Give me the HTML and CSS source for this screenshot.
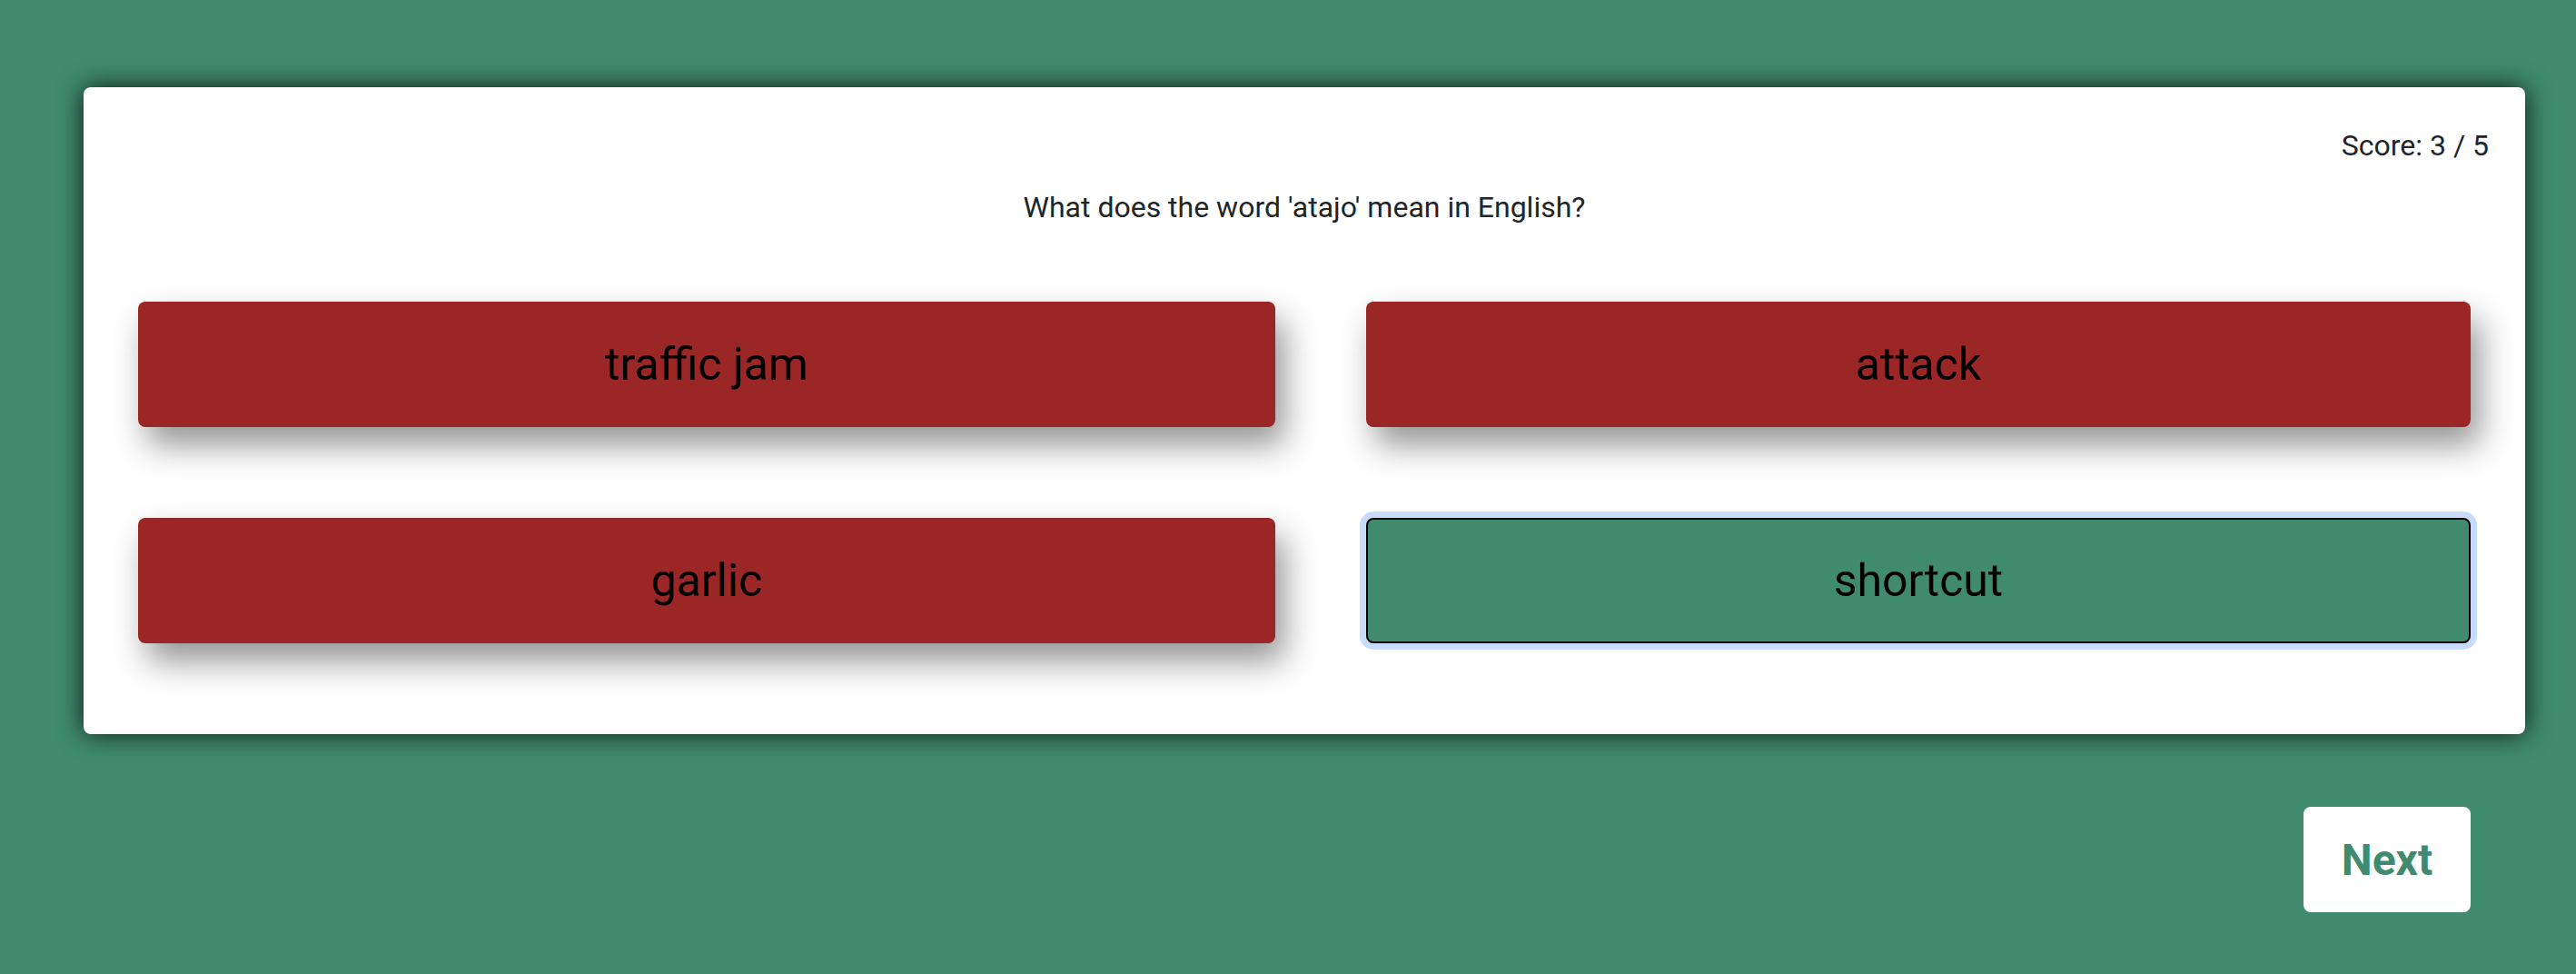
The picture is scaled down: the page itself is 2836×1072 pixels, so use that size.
FILE: index.html
```html
<!DOCTYPE html>
<html lang="en">
<head>
<meta charset="utf-8">
<title>Quiz</title>
<link rel="stylesheet" href="styles.css">
</head>
<body>
<div class="page">
  <div class="card">
    <div class="score">Score: 3 / 5</div>
    <div class="question">What does the word 'atajo' mean in English?</div>
    <div class="options">
      <button class="opt wrong">traffic jam</button>
      <button class="opt wrong">attack</button>
      <button class="opt wrong">garlic</button>
      <button class="opt correct">shortcut</button>
    </div>
  </div>
  <div class="actions">
    <button class="next">Next</button>
  </div>
</div>
</body>
</html>
```
FILE: styles.css
```css
html, body {
  margin: 0;
  padding: 0;
}

body {
  background: #408b6f;
  font-family: Roboto, "Liberation Sans", sans-serif;
  color: #212529;
  height: 1072px;
  overflow: hidden;
}

.page {
  padding: 96px 56px 0 92px;
}

.card {
  background: #ffffff;
  border-radius: 8px;
  box-shadow: 0 0 28px rgba(0, 0, 0, 0.85);
  padding: 40px 40px 100px;
}

.score {
  text-align: right;
  font-size: 32px;
  line-height: 48px;
}

.question {
  margin-top: 20px;
  text-align: center;
  font-size: 32px;
  line-height: 48px;
}

.options {
  margin: 80px 20px 0;
  display: grid;
  grid-template-columns: 1252px 1216px;
  column-gap: 100px;
  row-gap: 100px;
}

.opt {
  height: 138px;
  border: none;
  border-radius: 8px;
  font-family: Roboto, "Liberation Sans", sans-serif;
  font-size: 50px;
  color: #000000;
  padding: 0;
  display: flex;
  align-items: center;
  justify-content: center;
}

.wrong {
  background: #9b2626;
  box-shadow: 10px 20px 36px rgba(0, 0, 0, 0.42);
}

.correct {
  background: #408b6f;
  border: 2px solid #000000;
  box-shadow: 0 0 0 7px #c8dbfc;
}

.actions {
  display: flex;
  justify-content: flex-end;
  margin: 80px 60px 0 0;
}

.next {
  width: 184px;
  height: 116px;
  background: #ffffff;
  border: none;
  border-radius: 8px;
  color: #408b6f;
  font-family: Roboto, "Liberation Sans", sans-serif;
  font-weight: 700;
  font-size: 48px;
  padding: 0;
}
```
